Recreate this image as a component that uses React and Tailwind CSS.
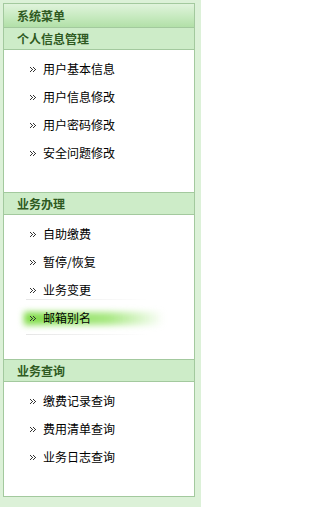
import React from "react";

const sections = [
  { title: "个人信息管理", items: ["用户基本信息", "用户信息修改", "用户密码修改", "安全问题修改"] },
  { title: "业务办理", items: ["自助缴费", "暂停/恢复", "业务变更", "邮箱别名"], active: 3 },
  { title: "业务查询", items: ["缴费记录查询", "费用清单查询", "业务日志查询"] },
];

function Bullet() {
  // little pixel double-chevron
  const dots = [
    [0, 0], [3, 0],
    [1, 1], [4, 1],
    [2, 2], [5, 2],
    [1, 3], [4, 3],
    [0, 4], [3, 4],
  ];
  return (
    <svg width="7" height="5" viewBox="0 0 7 5" className="shrink-0" shapeRendering="crispEdges">
      {dots.map(([x, y], i) => (
        <rect key={i} x={x} y={y} width="1" height="1" fill="#333" />
      ))}
    </svg>
  );
}

function MenuItem({ label, active }) {
  return (
    <li className="relative h-[28px] flex items-center pl-[26px]">
      {active && (
        <>
          <div className="absolute left-[20px] w-[140px] top-[8px] h-[13px] blur-[3px] bg-gradient-to-r from-[#7fdc45] via-[#a8e882] via-60% to-transparent" />
          <div className="absolute left-[22px] w-[122px] top-[-5px] h-px bg-gradient-to-r from-[#e6e6e6] to-transparent" />
          <div className="absolute left-[22px] w-[122px] bottom-[-3px] h-px bg-gradient-to-r from-[#e6e6e6] to-transparent" />
        </>
      )}
      <span className="relative flex items-center gap-[6px]">
        <Bullet />
        <span className="text-[12px] text-black leading-none">{label}</span>
      </span>
    </li>
  );
}

export default function App() {
  return (
    <div
      className="w-[201px] h-[507px] bg-[#dcf1d8] pt-[3px] pl-[3px] pr-[6px] overflow-hidden"
      style={{ fontFamily: '"Noto Sans CJK SC", "Noto Sans", sans-serif' }}
    >
      <div className="border-x border-t border-[#a3c99e] bg-white">
        <div className="h-[24px] flex items-center pl-[13px] border-b border-[#a3c99e] bg-gradient-to-b from-[#e0f3dc] via-[#c9ebc2] to-[#b2e0a8]">
          <span className="text-[12px] font-bold text-[#2f5a22] leading-none">系统菜单</span>
        </div>
        {sections.map((s, si) => (
          <div key={s.title}>
            <div className="h-[22px] flex items-center pl-[13px] border-b border-[#a3c99e] bg-[#cdecc8]">
              <span className="text-[12px] font-bold text-[#2f5a22] leading-none">{s.title}</span>
            </div>
            <ul className={`pt-[5px] border-b border-[#a3c99e] ${si === 1 ? "pb-[27px]" : "pb-[25px]"}`}>
              {s.items.map((it, i) => (
                <MenuItem key={it} label={it} active={s.active === i} />
              ))}
            </ul>
          </div>
        ))}
      </div>
    </div>
  );
}
